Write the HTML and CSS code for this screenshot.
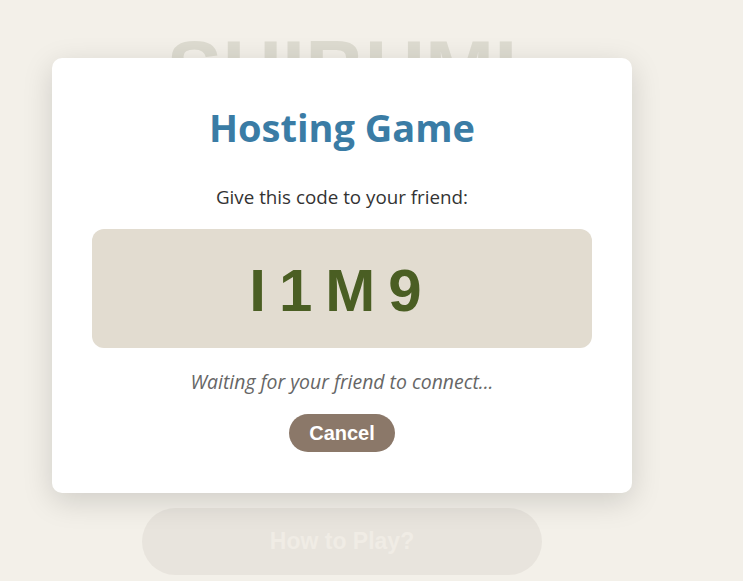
FILE: index.html
```html
<!DOCTYPE html>
<html lang="en">
<head>
    <meta charset="UTF-8">
    <meta name="viewport" content="width=device-width, initial-scale=1.0">
    <title>Shibumi</title>
    <link rel="stylesheet" href="styles.css">
</head>
<body>
    <div id="app">
        <!-- Main menu (dimmed behind the dialog) -->
        <h1 class="game-title">SHIBUMI</h1>
        <div class="menu">
            <button class="menu-button">How to Play?</button>
        </div>

        <!-- Hosting dialog -->
        <div class="overlay">
            <div class="modal">
                <h2 class="modal-title">Hosting Game</h2>
                <p class="modal-text">Give this code to your friend:</p>
                <div class="code-box">I1M9</div>
                <p class="waiting">Waiting for your friend to connect...</p>
                <button class="cancel-button">Cancel</button>
            </div>
        </div>
    </div>
</body>
</html>
```

FILE: styles.css
```css
body {
    margin: 0;
    background-color: #f3f0e9;
    font-family: "Open Sans", "Noto Sans", sans-serif;
    overflow: hidden;
}

#app {
    position: relative;
    width: 684px;
    height: 581px;
    display: flex;
    flex-direction: column;
    align-items: center;
}

.game-title {
    margin: 44px 0 0;
    font-family: "Liberation Sans", Arial, sans-serif;
    font-size: 83px;
    line-height: 54px;
    font-weight: bold;
    color: #dddbd0;
}

.menu {
    margin-top: 410px;
    display: flex;
    flex-direction: column;
    gap: 20px;
}

.menu-button {
    width: 400px;
    height: 67px;
    border: none;
    border-radius: 34px;
    background-color: #e8e4dd;
    color: #f0ece5;
    font-family: "Liberation Sans", Arial, sans-serif;
    font-size: 23px;
    font-weight: bold;
}

/* Dialog over the menu */
.overlay {
    position: absolute;
    inset: 0;
    display: flex;
    justify-content: center;
    align-items: flex-start;
    padding-top: 58px;
}

.modal {
    width: 500px;
    padding: 46px 40px 41px;
    background-color: #ffffff;
    border-radius: 10px;
    box-shadow: 0 8px 30px rgba(0, 0, 0, 0.15);
    display: flex;
    flex-direction: column;
    align-items: center;
    text-align: center;
}

.modal-title {
    margin: 0;
    font-size: 38px;
    line-height: 46px;
    font-weight: bold;
    color: #3a7ca5;
}

.modal-text {
    margin: 35px 0 0;
    font-size: 18.8px;
    line-height: 24px;
    color: #333333;
}

.code-box {
    margin-top: 20px;
    width: 100%;
    height: 119px;
    box-sizing: border-box;
    padding-top: 4px;
    background-color: #e2dcd0;
    border-radius: 12px;
    display: flex;
    align-items: center;
    justify-content: center;
    font-family: "Liberation Sans", Arial, sans-serif;
    font-size: 60px;
    font-weight: bold;
    letter-spacing: 13px;
    color: #4a5e23;
}

.waiting {
    margin: 22px 0 0;
    font-size: 19.4px;
    line-height: 24px;
    font-style: italic;
    color: #666666;
}

.cancel-button {
    margin-top: 20px;
    height: 38px;
    padding: 0 20px;
    border: none;
    border-radius: 19px;
    background-color: #8b7869;
    color: #ffffff;
    font-family: "Liberation Sans", Arial, sans-serif;
    font-size: 20px;
    font-weight: bold;
    cursor: pointer;
}
```
